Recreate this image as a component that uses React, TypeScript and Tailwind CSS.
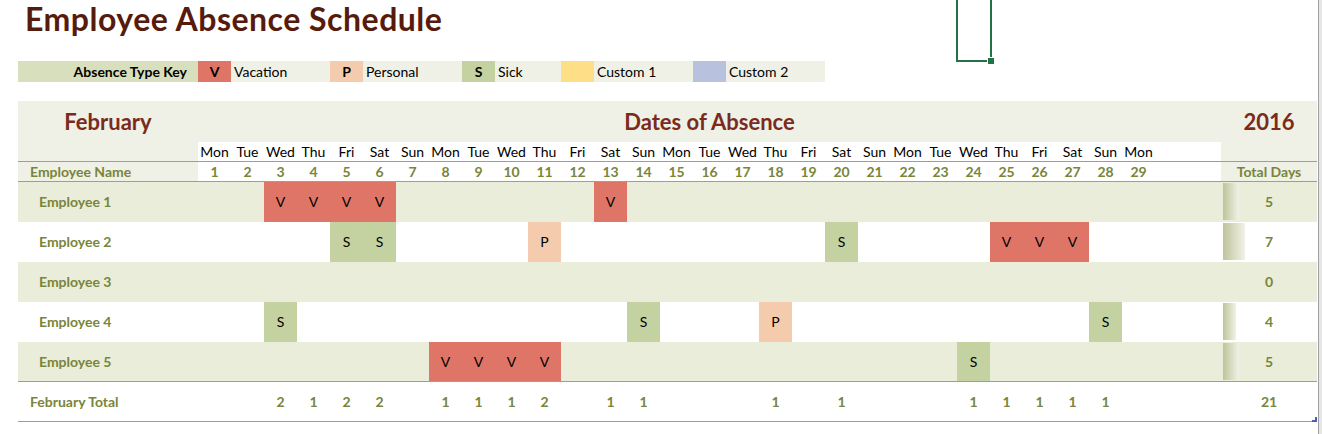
import React from 'react';

type Code = 'V' | 'P' | 'S';

const DAY_NAMES = ['Mon', 'Tue', 'Wed', 'Thu', 'Fri', 'Sat', 'Sun'];
const DAYS = Array.from({ length: 31 }, (_, i) => i + 1);
const DAYS_IN_MONTH = 29;

const employees: { name: string; marks: Record<number, Code> }[] = [
  { name: 'Employee 1', marks: { 3: 'V', 4: 'V', 5: 'V', 6: 'V', 13: 'V' } },
  { name: 'Employee 2', marks: { 5: 'S', 6: 'S', 11: 'P', 20: 'S', 25: 'V', 26: 'V', 27: 'V' } },
  { name: 'Employee 3', marks: {} },
  { name: 'Employee 4', marks: { 3: 'S', 14: 'S', 18: 'P', 28: 'S' } },
  { name: 'Employee 5', marks: { 8: 'V', 9: 'V', 10: 'V', 11: 'V', 24: 'S' } },
];

const codeBg: Record<Code, string> = {
  V: 'bg-[#df7566]',
  P: 'bg-[#f5cbad]',
  S: 'bg-[#c4d1a1]',
};

const legend = [
  { code: 'V', label: 'Vacation', bg: 'bg-[#df7566]' },
  { code: 'P', label: 'Personal', bg: 'bg-[#f5cbad]' },
  { code: 'S', label: 'Sick', bg: 'bg-[#c4d1a1]', short: true },
  { code: '', label: 'Custom 1', bg: 'bg-[#fedf88]' },
  { code: '', label: 'Custom 2', bg: 'bg-[#b8c1de]' },
];

const dayTotal = (d: number) => employees.filter((e) => e.marks[d]).length;
const empTotal = (m: Record<number, Code>) => Object.keys(m).length;
const grandTotal = employees.reduce((s, e) => s + empTotal(e.marks), 0);

const App: React.FC = () => {
  return (
    <div className="flex h-[434px] w-[1322px] overflow-hidden bg-white font-['Lato',sans-serif] text-[14px]">
      <div className="relative w-[1318px] pl-[18px]">
        {/* selected cell, Excel style */}
        <div className="absolute left-[956px] top-[-4px] h-[66px] w-[36px] border-x-2 border-b-2 border-[#217346]" />
        <div className="absolute left-[987px] top-[57px] h-[8px] w-[8px] border border-white bg-[#217346]" />

        <h1 className="h-[40px] pl-[7px] text-[32px] font-bold leading-[37px] tracking-[0.5px] text-[#561b0c]">
          Employee Absence Schedule
        </h1>

        {/* key */}
        <div className="mt-[21px] flex h-[21px] items-stretch leading-[21px]">
          <div className="w-[180px] bg-[#d8dfbd] pr-[11px] text-right font-bold text-black">Absence Type Key</div>
          {legend.map((l) => (
            <React.Fragment key={l.label}>
              <div className={`w-[33px] text-center font-bold text-black ${l.bg}`}>{l.code}</div>
              <div className={`${l.short ? 'w-[66px]' : 'w-[99px]'} bg-[#eff0e6] pl-[3px] text-black`}>{l.label}</div>
            </React.Fragment>
          ))}
        </div>

        {/* table */}
        <div className="mt-[19px] w-[1299px]">
          <div className="flex h-[41px] items-center bg-[#eff0e6] text-[22px] font-bold text-[#7a2b1b]">
            <div className="w-[180px] text-center">February</div>
            <div className="w-[1023px] text-center">Dates of Absence</div>
            <div className="w-[96px] text-center">2016</div>
          </div>

          <div className="flex h-[20px] border-b border-[#9aab5f] leading-[19px] text-black">
            <div className="w-[180px] bg-[#eff0e6]" />
            <div className="flex bg-white">
              {DAYS.map((d) => (
                <div key={d} className="w-[33px] text-center">
                  {d <= DAYS_IN_MONTH ? DAY_NAMES[(d - 1) % 7] : ''}
                </div>
              ))}
            </div>
            <div className="w-[96px] bg-[#eff0e6]" />
          </div>

          <div className="flex h-[20px] border-b border-[#9aab5f] font-bold leading-[19px] text-[#78853a]">
            <div className="w-[180px] bg-[#eff0e6] pl-[12px]">Employee Name</div>
            <div className="flex bg-white">
              {DAYS.map((d) => (
                <div key={d} className="w-[33px] text-center">
                  {d <= DAYS_IN_MONTH ? d : ''}
                </div>
              ))}
            </div>
            <div className="w-[96px] bg-[#eff0e6] text-center">Total Days</div>
          </div>

          {employees.map((e, i) => {
            const total = empTotal(e.marks);
            return (
              <div
                key={e.name}
                className={`flex h-[40px] leading-[40px] ${i % 2 === 0 ? 'bg-[#e9edda]' : 'bg-white'} ${
                  i === employees.length - 1 ? 'border-b border-[#9aab5f] leading-[39px]' : ''
                }`}
              >
                <div className="w-[180px] pl-[21px] font-bold text-[#78853a]">{e.name}</div>
                <div className="flex">
                  {DAYS.map((d) => {
                    const c = e.marks[d];
                    return (
                      <div key={d} className={`w-[33px] text-center text-black ${c ? codeBg[c] : ''}`}>
                        {c ?? ''}
                      </div>
                    );
                  })}
                </div>
                <div className="relative w-[96px] text-center font-bold text-[#78853a]">
                  {total > 0 && (
                    <div
                      className="absolute left-[2px] top-[1px] h-[37px] bg-linear-to-r from-[#bfc49a] to-[#f1f2e8]"
                      style={{ width: `${Math.round((total / 7) * 22)}px` }}
                    />
                  )}
                  <span className="relative">{total}</span>
                </div>
              </div>
            );
          })}

          <div className="flex h-[40px] border-b border-[#9aab5f] font-bold leading-[39px] text-[#78853a]">
            <div className="w-[180px] pl-[12px]">February Total</div>
            <div className="flex">
              {DAYS.map((d) => {
                const t = dayTotal(d);
                return (
                  <div key={d} className="w-[33px] text-center">
                    {t > 0 ? t : ''}
                  </div>
                );
              })}
            </div>
            <div className="w-[96px] text-center">{grandTotal}</div>
          </div>
        </div>

        {/* table resize handle */}
        <svg className="absolute left-[1312px] top-[417px]" width="5" height="5" viewBox="0 0 5 5">
          <path d="M3 0h2v5H0V3h3z" fill="#4a5fb5" />
        </svg>
      </div>
      <div className="w-[4px] border-l border-[#a0a0a0] bg-[#e6e6e6]" />
    </div>
  );
};

export default App;
